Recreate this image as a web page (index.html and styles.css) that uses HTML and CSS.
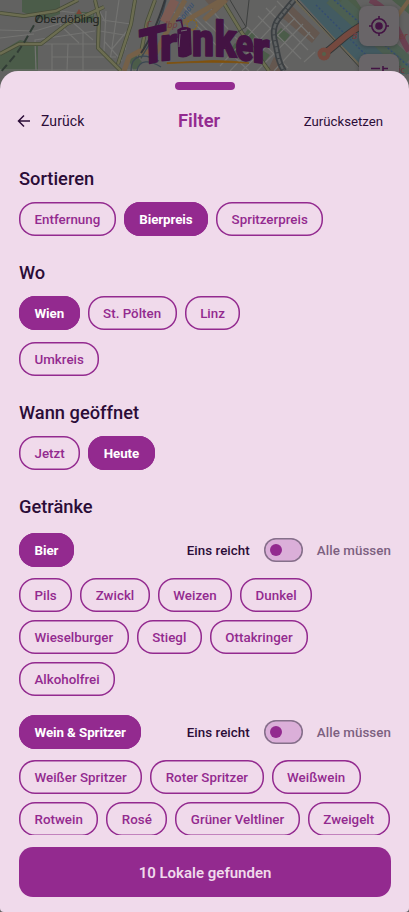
FILE: index.html
```html
<!DOCTYPE html>
<html lang="de">
<head>
<meta charset="utf-8">
<meta name="viewport" content="width=device-width, initial-scale=1">
<title>Filter</title>
<link rel="stylesheet" href="styles.css">
</head>
<body>
<div class="app">
<svg class="map" viewBox="0 0 409 96" aria-hidden="true">
  <rect width="409" height="96" fill="#626261"/>
  <g fill="#4b5c49">
    <path d="M22 0h38v14l-16 6-22-8zM0 52l20-12 18 4v27H0zM74 12h20v10H78zM128 58l6-5 8 9-8 10zM336 0h20l8 12-17 3zM392 0h17v14zM351 27l8 8v12l-15-13zM381 50l12 14-8 7h-8z"/>
    <path d="M235 43l7 5-5 7-7-5zM248 29l8 6-6 7-7-6zM281 28l9 7-6 8-9-7zM262 50l8 5-6 8-8-5z"/>
  </g>
  <g fill="#64574f">
    <path d="M205 0l24 0-13 13zM278 14l12-10 30 29-8 10zM274 57l12 9-5 6h-14z"/>
  </g>
  <path d="M300 0h38l71 64v10h-42z" fill="#435b62"/>
  <path d="M329 0l80 72M342 0l67 60" stroke="#4c5f52" stroke-width="8" fill="none"/>
  <path d="M334 0l75 67M316 5l66 66M298 4l68 67" stroke="#334b72" stroke-width="1.3" stroke-dasharray="2 2" fill="none"/>
  <path d="M295 0l70 71" stroke="#6b6554" stroke-width="3" fill="none"/>
  <path d="M297 0l66 71" stroke="#353b3c" stroke-width="1" fill="none"/>
  <g stroke="#737371" stroke-width="1.2" fill="none">
    <path d="M0 30l35 1 27-8M36 70l-1-30 60-9M41 44h57M52 44v27M68 44l-1 27M83 31v40M52 57h64M60 25l19 18M70 20l23 20M102 20l29 4M100 31l30 5M106 11l-2 40M119 0l-9 61M135 5l-10 45M96 5l10 18M60 11l33 4M0 38l34-4M105 42l17 19M112 49l15-18M0 70h139"/>
    <path d="M220 66l56-60M230 71l58-61M242 71l53-53M257 71l46-47M274 71l36-39M225 48l24 23M235 37l35 34M246 26l42 42M258 16l43 43M266 8l42 42M277 1l37 38M205 21l21 20M196 25l24 24M210 8l18 21M180 3l32 32M170 9l15 12M304 62l11-10"/>
  </g>
  <g fill="none" stroke-linejoin="round">
    <path d="M0 13l24 3 32-5 22-11M0 54l19-10h22L67 24l37-17M95 0l4 17-1 31 23 23M135 0l-4 24-13 40M222 0l20 33 27 38M155 0l-8 22-7 36" stroke="#464b38" stroke-width="4"/>
    <path d="M0 13l24 3 32-5 22-11M0 54l19-10h22L67 24l37-17M95 0l4 17-1 31 23 23M135 0l-4 24-13 40M222 0l20 33 27 38M155 0l-8 22-7 36" stroke="#6c6d51" stroke-width="2.5"/>
    <path d="M124 71l5-14 11-6 16 2 9-18 20-35M182 23l40-23M204 20l22-20" stroke="#756048" stroke-width="5"/>
    <path d="M131 71c0-17 13-18 28-10M137 71c2-12 13-11 24-4M141 58c8-12 20-34 25-58" stroke="#3c4852" stroke-width="1.3"/>
    <path d="M175 0l-11 22" stroke="#7c5b53" stroke-width="9"/>
    <path d="M165 0c-5 16-12 36-24 53" stroke="#34373a" stroke-width="2"/>
    <path d="M230 0l16 27M246 27l3-27M246 27l-13 8" stroke="#3e403f" stroke-width="1"/>
    <path d="M294 0L280 17c-8 9-7 18-4 29 2 11 3 17 8 25" stroke="#3c4043" stroke-width="6"/>
    <path d="M294 0L280 17c-8 9-7 18-4 29 2 11 3 17 8 25" stroke="#5d6061" stroke-width="2.5" stroke-dasharray="5 1"/>
    <path d="M325 53c14-10 22-21 43-31" stroke="#343737" stroke-width="8"/>
    <path d="M325 53c14-10 22-21 43-31" stroke="#75493f" stroke-width="6"/>
    <path d="M370 0c23 10 28 34 39 51" stroke="#6a4051" stroke-width="6"/>
    <path d="M393 22l16-22" stroke="#756048" stroke-width="4"/>
    <path d="M40 15l-7 12-8 14-8 12L0 73" stroke="#313c35" stroke-width="2" stroke-dasharray="8 4"/>
  </g>
  <circle cx="324" cy="54" r="6.5" fill="#75493f"/><circle cx="324" cy="54" r="2" fill="#53624c"/>
  <path d="M79 9l3 5h-6z" fill="#7b4537"/>
  <circle cx="192" cy="25" r="5" fill="none" stroke="#88651e" stroke-width="1.3" stroke-dasharray="2 1"/>
  <text class="place" x="34.5" y="23" textLength="65">Oberdöbling</text>
  <text class="water" transform="translate(181 24) rotate(-55)">Donau</text>
  <text class="station" x="146" y="28">C</text><text class="station" x="165" y="28">lbp</text>
  <text class="station bold" x="352" y="39">B</text><text class="station bold" x="399" y="39">er</text><text class="station bold" x="398" y="73">ic</text>
  <g class="logo">
    <text transform="matrix(1 -.24 .03 1 139.5 66)" font-size="50" textLength="28" lengthAdjust="spacingAndGlyphs">T</text>
    <text transform="matrix(1 -.1 0 1 160 61)" font-size="47" textLength="17" lengthAdjust="spacingAndGlyphs">r</text>
    <text transform="matrix(1 0 0 1 192 56)" font-size="46" textLength="22" lengthAdjust="spacingAndGlyphs">n</text>
    <text transform="matrix(1 .07 0 1 214.5 56)" font-size="49" textLength="22" lengthAdjust="spacingAndGlyphs">k</text>
    <text transform="matrix(1 .1 0 1 235.5 59.5)" font-size="46" textLength="18" lengthAdjust="spacingAndGlyphs">e</text>
    <text transform="matrix(1 .12 0 1 252.5 62)" font-size="44" textLength="17" lengthAdjust="spacingAndGlyphs">r</text>
    <path d="M178 30q6-4 12-1l1 25q-6 4-12 2z"/>
    <path d="M176 21l5-1 2 9M184 31l4-1M179 32l-1 6" fill="none" stroke="#431343" stroke-width="1.5"/>
    <path d="M181 31l6-1M180 34l-1 13" fill="none" stroke="#777" stroke-width=".9"/>
  </g>
  <path d="M167 62.8l46-2.2q20 0 36 2.5-43-1.8-82 .5z" fill="#80520d" stroke="#80520d" stroke-width=".8"/>
  <g class="map-button">
    <rect x="359" y="6" width="40" height="40" rx="8"/>
    <rect x="359" y="54" width="40" height="40" rx="8"/>
  </g>
  <g fill="none" stroke="#431343" stroke-width="1.6">
    <circle cx="379" cy="26" r="7.2"/><path d="M379 16v3M379 33v3M369 26h3M386 26h3M371 68.5h9M383 68.5h5M383 66v6"/>
  </g>
  <circle cx="379" cy="26" r="3.8" fill="#431343"/>
</svg>

<main class="sheet">
  <div class="handle"></div>
  <header class="header">
    <button class="back"><svg width="14" height="14" viewBox="0 0 14 14"><path d="M13 7H2M7 1.5L1.5 7 7 12.5"/></svg><span>Zurück</span></button>
    <h1>Filter</h1>
    <button class="reset">Zurücksetzen</button>
  </header>
  <div class="content">
    <section class="sort">
      <h2>Sortieren</h2>
      <div class="chips"><button class="chip">Entfernung</button><button class="chip on">Bierpreis</button><button class="chip">Spritzerpreis</button></div>
    </section>
    <section>
      <h2>Wo</h2>
      <div class="chips"><button class="chip on">Wien</button><button class="chip">St. Pölten</button><button class="chip">Linz</button></div>
      <div class="chips nearby"><button class="chip">Umkreis</button></div>
    </section>
    <section>
      <h2>Wann geöffnet</h2>
      <div class="chips"><button class="chip">Jetzt</button><button class="chip on">Heute</button></div>
    </section>
    <section>
      <h2>Getränke</h2>
      <div class="group">
        <div class="group-head"><button class="chip on">Bier</button><span class="any">Eins reicht</span><span class="toggle"></span><span class="all">Alle müssen</span></div>
        <div class="chips"><button class="chip">Pils</button><button class="chip">Zwickl</button><button class="chip">Weizen</button><button class="chip">Dunkel</button></div>
        <div class="chips"><button class="chip">Wieselburger</button><button class="chip">Stiegl</button><button class="chip">Ottakringer</button></div>
        <div class="chips"><button class="chip">Alkoholfrei</button></div>
      </div>
      <div class="group">
        <div class="group-head"><button class="chip on">Wein &amp; Spritzer</button><span class="any">Eins reicht</span><span class="toggle"></span><span class="all">Alle müssen</span></div>
        <div class="chips"><button class="chip">Weißer Spritzer</button><button class="chip">Roter Spritzer</button><button class="chip">Weißwein</button></div>
        <div class="chips"><button class="chip">Rotwein</button><button class="chip">Rosé</button><button class="chip">Grüner Veltliner</button><button class="chip">Zweigelt</button></div>
      </div>
    </section>
  </div>
  <footer><button class="submit">10 Lokale gefunden</button></footer>
</main>
</div>
</body>
</html>
```
FILE: styles.css
```css
* { box-sizing: border-box; }
body { margin: 0; font-family: Roboto, sans-serif; color: #2b0c37; }
button { font: inherit; color: inherit; margin: 0; padding: 0; border: 0; background: none; }
h1, h2 { margin: 0; }
.app { height: 912px; overflow: hidden; background: #626261; }
.map { display: block; width: 409px; height: 96px; margin-bottom: -25px; }
.place { font: 11.5px "Noto Sans", sans-serif; fill: #1f2220; }
.water { font: italic 8px "Noto Sans", sans-serif; fill: #344e76; }
.station { font: italic 9px "Noto Sans", sans-serif; fill: #713e40; }
.bold { font-weight: 600; }
.logo { font-family: Roboto, sans-serif; font-weight: 900; fill: #431343; stroke: #431343; stroke-width: 1.5; stroke-linejoin: round; }
.map-button { fill: #696568; filter: drop-shadow(0 1px 2px #3339); }
.sheet { position: relative; height: 841px; padding-top: 11px; background: #f0daeb; border-radius: 18px 18px 4px 4px; display: flex; flex-direction: column; }
.handle { flex: none; width: 60px; height: 8px; margin: 0 auto; border-radius: 4px; background: #932a8f; }
.header { height: 20px; margin-top: 21px; padding: 0 26px 0 17px; display: grid; grid-template-columns: 1fr auto 1fr; align-items: center; flex: none; }
.back { display: flex; align-items: center; gap: 10px; font-size: 14px; letter-spacing: .1px; }
.back svg { fill: none; stroke: #2b0c37; stroke-width: 1.5; }
h1 { font-size: 18.3px; line-height: 20px; font-weight: 600; color: #932a8f; transform: translateX(-1px); }
.reset { justify-self: end; font-size: 13.2px; }
.content { height: 704px; padding: 36px 0 0 19px; overflow: hidden; flex: none; }
section { margin-bottom: 25px; }
h2 { font-size: 18.3px; line-height: 24px; font-weight: 500; margin-bottom: 11px; }
.chips { display: flex; gap: 8px; }
.nearby { margin-top: 12px; }
.chip { height: 34px; box-shadow: inset 0 0 0 1.5px #932a8f; border-radius: 16px; padding: 0 15.5px; font-size: 13.33px; font-weight: 500; letter-spacing: .015px; color: #932a8f; white-space: nowrap; flex: none; }
.chip.on { background: #932a8f; color: #fff; font-weight: 700; letter-spacing: -.07px; }
.group { display: flex; flex-direction: column; gap: 8px; margin-bottom: 19px; }
h2 + .group { margin-top: 14px; }
.group-head { display: flex; align-items: center; padding-right: 18px; margin-bottom: 3px; font-size: 13.33px; font-weight: 500; letter-spacing: .07px; }
.any { margin-left: auto; }
.toggle { width: 39px; height: 24px; margin: 0 14px; box-shadow: inset 0 0 0 1.5px #85708a; border-radius: 12px; background: #dbafd9; display: flex; align-items: center; padding-left: 6px; }
.toggle::before { content: ""; width: 12px; height: 12px; border-radius: 50%; background: #932a8f; }
.all { color: #7c6080; }
footer { padding: 12px 18px 15px 19px; }
.submit { width: 100%; height: 50px; border-radius: 14px; background: #932a8f; color: #f0daeb; font-size: 15px; font-weight: 600; padding-top: 1px; }
```
